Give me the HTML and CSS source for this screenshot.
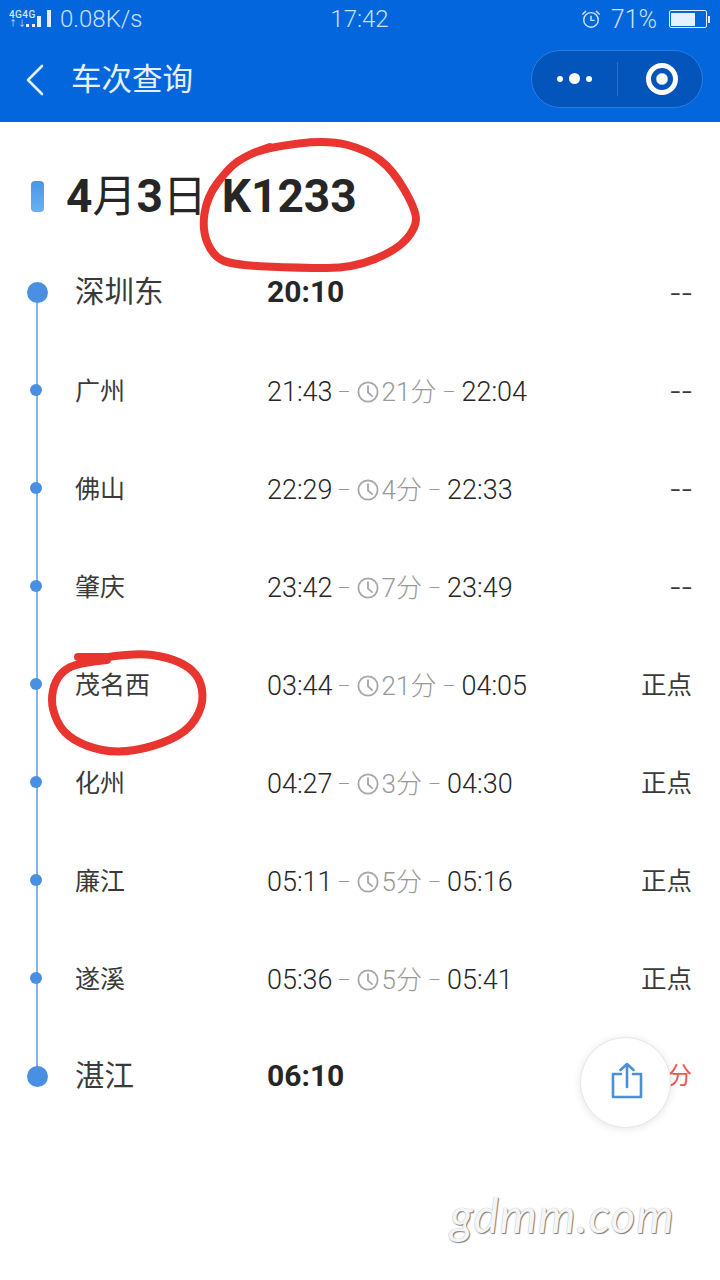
FILE: index.html
```html
<!DOCTYPE html>
<html lang="zh">
<head>
<meta charset="utf-8">
<title>车次查询</title>
<link rel="stylesheet" href="styles.css">
</head>
<body>
<div class="page">
  <header class="top">
    <div class="status">
      <div class="status-left">
        <div class="net"><span class="net-label">4G4G</span><span class="net-arrows">↑↓</span></div>
        <svg class="signal" width="26" height="18" viewBox="0 0 26 18"><rect x="0" y="14" width="3" height="3" fill="#e4f0fd"/><rect x="6" y="14" width="3" height="3" fill="#e4f0fd"/><rect x="11" y="6" width="4" height="11" fill="#e4f0fd"/><rect x="21" y="0" width="4" height="17" fill="#e4f0fd"/></svg>
        <span class="speed">0.08K/s</span>
      </div>
      <div class="clock-time">17:42</div>
      <div class="status-right">
        <svg class="alarm" width="20" height="20" viewBox="0 0 22 22" fill="none" stroke="#cfe3fb" stroke-width="1.6"><circle cx="11" cy="12" r="8"/><path d="M11 7.5V12.5H15"/><path d="M1.5 6 5.5 2.2M20.5 6 16.5 2.2"/></svg>
        <span class="pct">71%</span>
        <div class="battery"><div class="battery-fill"></div></div><div class="battery-tip"></div>
      </div>
    </div>
    <nav class="nav">
      <svg class="back" width="18" height="32" viewBox="0 0 18 32" fill="none" stroke="#e6f1fe" stroke-width="2.6" stroke-linecap="round" stroke-linejoin="round"><path d="M16 2 2 16 16 30"/></svg>
      <h1 class="nav-title">车次查询</h1>
      <div class="capsule">
        <div class="more"><i class="d"></i><i class="d big"></i><i class="d"></i></div>
        <div class="divider"></div>
        <div class="target"><i class="target-core"></i></div>
      </div>
    </nav>
  </header>

  <main class="content">
    <div class="title-row">
      <div class="title-bar"></div>
      <h2 class="title">4<span class="cjk">月</span>3<span class="cjk">日</span><span class="train">K1233</span></h2>
    </div>

    <ol class="stops">
      <li class="stop major"><i class="dot"></i><span class="name">深圳东</span><span class="times"><b>20:10</b></span><span class="state none">--</span></li>
      <li class="stop"><i class="dot"></i><span class="name">广州</span><span class="times"><span>21:43</span><em class="dash">–</em><svg class="ck" viewBox="0 0 24 24"><circle cx="12" cy="12" r="10.5"/><path d="M12 5.5V12.5L16.5 16.5"/></svg><em class="stay">21分</em><em class="dash">–</em><span>22:04</span></span><span class="state none">--</span></li>
      <li class="stop"><i class="dot"></i><span class="name">佛山</span><span class="times"><span>22:29</span><em class="dash">–</em><svg class="ck" viewBox="0 0 24 24"><circle cx="12" cy="12" r="10.5"/><path d="M12 5.5V12.5L16.5 16.5"/></svg><em class="stay">4分</em><em class="dash">–</em><span>22:33</span></span><span class="state none">--</span></li>
      <li class="stop"><i class="dot"></i><span class="name">肇庆</span><span class="times"><span>23:42</span><em class="dash">–</em><svg class="ck" viewBox="0 0 24 24"><circle cx="12" cy="12" r="10.5"/><path d="M12 5.5V12.5L16.5 16.5"/></svg><em class="stay">7分</em><em class="dash">–</em><span>23:49</span></span><span class="state none">--</span></li>
      <li class="stop"><i class="dot"></i><span class="name">茂名西</span><span class="times"><span>03:44</span><em class="dash">–</em><svg class="ck" viewBox="0 0 24 24"><circle cx="12" cy="12" r="10.5"/><path d="M12 5.5V12.5L16.5 16.5"/></svg><em class="stay">21分</em><em class="dash">–</em><span>04:05</span></span><span class="state">正点</span></li>
      <li class="stop"><i class="dot"></i><span class="name">化州</span><span class="times"><span>04:27</span><em class="dash">–</em><svg class="ck" viewBox="0 0 24 24"><circle cx="12" cy="12" r="10.5"/><path d="M12 5.5V12.5L16.5 16.5"/></svg><em class="stay">3分</em><em class="dash">–</em><span>04:30</span></span><span class="state">正点</span></li>
      <li class="stop"><i class="dot"></i><span class="name">廉江</span><span class="times"><span>05:11</span><em class="dash">–</em><svg class="ck" viewBox="0 0 24 24"><circle cx="12" cy="12" r="10.5"/><path d="M12 5.5V12.5L16.5 16.5"/></svg><em class="stay">5分</em><em class="dash">–</em><span>05:16</span></span><span class="state">正点</span></li>
      <li class="stop"><i class="dot"></i><span class="name">遂溪</span><span class="times"><span>05:36</span><em class="dash">–</em><svg class="ck" viewBox="0 0 24 24"><circle cx="12" cy="12" r="10.5"/><path d="M12 5.5V12.5L16.5 16.5"/></svg><em class="stay">5分</em><em class="dash">–</em><span>05:41</span></span><span class="state">正点</span></li>
      <li class="stop major"><i class="dot"></i><span class="name">湛江</span><span class="times"><b>06:10</b></span><span class="state late">分</span></li>
    </ol>
  </main>

  <button class="fab" type="button" aria-label="分享">
    <svg class="share" width="34" height="38" viewBox="0 0 34 38" fill="none" stroke="#4a90d9" stroke-width="2.6" stroke-linecap="round" stroke-linejoin="round"><path d="M11 13H3V36H31V13H23"/><path d="M17 26V3M10.5 9 17 3 23.5 9"/></svg>
  </button>

  <svg class="scribble" width="720" height="1280" viewBox="0 0 720 1280" fill="none" stroke="#e8352f" stroke-width="8" stroke-linecap="round" stroke-linejoin="round">
    <path d="M256 152Q270 147 299 143.5Q328 140 347.5 145Q367 150 380 160Q393 170 404.5 190Q416 210 416 219Q416 228 406.5 239Q397 250 375 259Q353 268 326.5 268Q300 268 266.5 266.5Q233 265 223 260.5Q213 256 207.5 243Q202 230 204.5 213.5Q207 197 217 183.5Q227 170 234.5 164Q242 158 256 152L270 147"/>
    <path d="M78 657L108 657Q137 653 152 655Q167 657 178.5 662Q190 667 196 675Q202 683 202.5 695Q203 707 195 719.5Q187 732 170 739.5Q153 747 135 750Q117 753 102 750Q87 747 75 740Q63 733 57.5 721.5Q52 710 52 700Q52 690 56 681.5Q60 673 68.5 668Q77 663 107 660"/>
  </svg>

  <div class="watermark">gdmm.com</div>
</div>
</body>
</html>
```
FILE: styles.css
```css
* { box-sizing: border-box; }
html, body { margin: 0; padding: 0; background: #fff; }
body { font-family: Roboto, "Noto Sans CJK SC", sans-serif; color: #262626; }
.page { position: relative; width: 720px; height: 1280px; overflow: hidden; background: #fff; }

.top { height: 122px; background: #0466dd; color: #fff; }
.status { height: 38px; display: flex; align-items: center; justify-content: space-between; padding: 0 10px 0 9px; color: #c9e0fb; }
.status-left { display: flex; align-items: center; width: 300px; }
.net { display: flex; flex-direction: column; width: 33px; line-height: 1; color: #d5e6fa; }
.net-label { font-size: 10px; font-weight: 500; white-space: nowrap; letter-spacing: 0.4px; }
.net-arrows { font-size: 8px; white-space: nowrap; letter-spacing: 1px; }
.signal { margin-left: -16px; }
.speed { font-size: 24px; font-weight: 300; margin-left: 8px; }
.clock-time { font-size: 24px; font-weight: 300; color: #c9e0fb; }
.status-right { width: 300px; display: flex; align-items: center; justify-content: flex-end; }
.alarm { margin-right: 10px; }
.pct { font-size: 25px; font-weight: 300; margin-right: 12px; }
.battery { width: 38px; height: 18px; border: 1.5px solid #e4f0fd; border-radius: 2px; padding: 1.5px; }
.battery-fill { width: 71%; height: 100%; background: #e4f0fd; }
.battery-tip { width: 2px; height: 7px; background: #e4f0fd; margin-left: 1px; }

.nav { height: 84px; display: flex; align-items: center; padding: 0 17px 0 26px; }
.back { flex: none; }
.nav-title { margin: 0 0 0 27px; font-size: 30.5px; font-weight: 400; color: #e6f1fe; flex: 1; line-height: 1; }
.capsule { width: 172px; height: 58px; margin-top: -3px; border-radius: 29px; background: #0354bb; border: 1px solid #2a7ce0; display: flex; align-items: center; }
.more { width: 85px; display: flex; align-items: center; justify-content: center; gap: 6px; }
.d { display: block; width: 6px; height: 6px; border-radius: 50%; background: #fff; }
.d.big { width: 11px; height: 11px; }
.divider { width: 1px; height: 34px; background: #2a70c8; }
.target { flex: 1; display: flex; align-items: center; justify-content: center; padding-left: 4px; }
.target-core { display: block; width: 32px; height: 32px; border-radius: 50%; border: 5px solid #fff; background: radial-gradient(circle, #fbf6e4 0, #fff 5px, #0354bb 6.5px); }

.title-row { height: 121px; display: flex; align-items: center; padding: 26px 0 0 31px; }
.title-bar { width: 13px; height: 31px; margin-top: 2px; border-radius: 4px; background: linear-gradient(#4a96e6, #68b2f2); }
.title { margin: 0 0 0 22px; font-size: 46px; font-weight: 700; color: #262626; line-height: 1; white-space: nowrap; }
.cjk { font-weight: 400; font-size: 44px; }
.train { margin-left: 15px; }

.stops { list-style: none; margin: 0; padding: 0; position: relative; }
.stops::before { content: ""; position: absolute; left: 36px; top: 49px; bottom: 49px; width: 2px; background: #7fb4ec; }
.stop { height: 98px; display: flex; align-items: center; padding-right: 28px; }
.dot { flex: none; position: relative; width: 12px; height: 12px; border-radius: 50%; background: #4a90e2; margin-left: 30px; margin-right: 33px; }
.major .dot { width: 21px; height: 21px; margin-left: 27px; margin-right: 27px; }
.name { width: 192px; padding-top: 2px; font-size: 25px; color: #3a3a3a; line-height: 1; flex: none; }
.major .name { font-size: 29.5px; }
.times { flex: 1; display: flex; align-items: center; padding-top: 4px; font-size: 27px; font-weight: 300; color: #262626; white-space: nowrap; line-height: 1; }
.major .times { padding-top: 0; }
.times b { font-size: 30px; font-weight: 700; }
.dash { font-style: normal; font-weight: 300; color: #999; margin: 0 6px 0 5px; font-size: 20px; }
.stay { font-style: normal; color: #999; font-size: 26px; margin-right: 1px; }
.ck { width: 22px; height: 22px; margin: 0 3px 0 0; fill: none; stroke: #a8a8a8; stroke-width: 2; stroke-linecap: round; stroke-linejoin: round; flex: none; }
.state { padding-top: 4px; font-size: 25.5px; color: #3a3a3a; line-height: 1; white-space: nowrap; }
.state.none { font-size: 36px; font-weight: 300; letter-spacing: 1px; margin-right: -1px; }
.state.late { color: #e85a4f; font-size: 24px; padding-top: 0; }

.fab { position: absolute; left: 580px; top: 1037px; width: 91px; height: 91px; border-radius: 50%; background: #fff; border: 1px solid #e6e6e6; box-shadow: 0 1px 8px rgba(0,0,0,.10); padding: 0; display: flex; align-items: center; justify-content: center; }
.share { margin: 0 0 6px 2px; }
.scribble { position: absolute; left: 0; top: 0; pointer-events: none; }
.watermark { position: absolute; left: 450px; top: 1189px; font-family: Lato, sans-serif; font-style: italic; font-weight: 400; font-size: 47.5px; line-height: 1.1; color: #f5f5f5; letter-spacing: 1px; text-shadow: 1px 1px 1px #777, 0 0 1px #aaa; }
```
